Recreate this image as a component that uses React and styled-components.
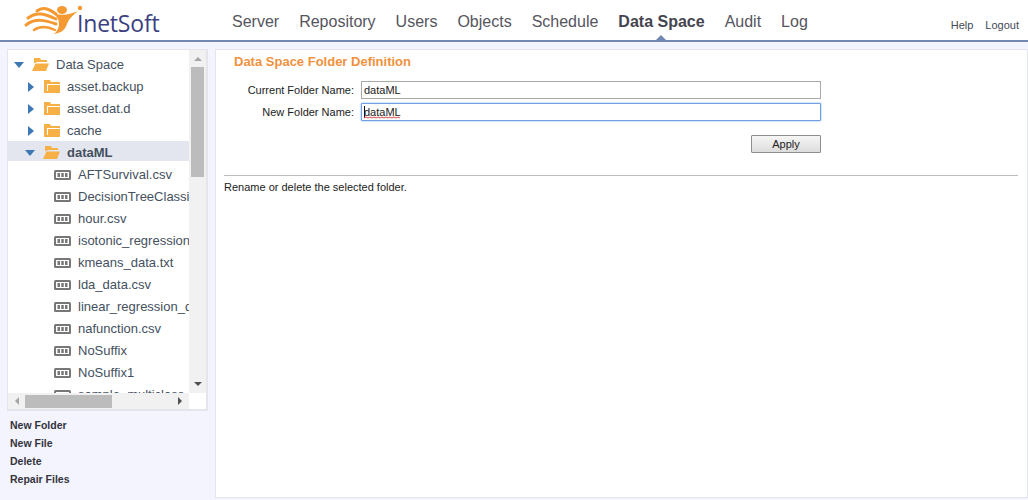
import React from "react";
import styled, { createGlobalStyle } from "styled-components";

const Global = createGlobalStyle`
  html, body { margin: 0; padding: 0; height: 100%; background: #f4f4fe; overflow: hidden; }
  * { box-sizing: border-box; }
  body { font-family: "Liberation Sans", Arial, sans-serif; }
`;
const Page = styled.div`width:1028px;height:500px;display:flex;flex-direction:column;background:#f4f4fe;`;
const Header = styled.header`height:42px;flex:none;background:#fff;border-bottom:2px solid #7189b2;display:flex;align-items:flex-start;position:relative;`;
const LogoBox = styled.div`width:232px;height:40px;padding:4px 0 0 23px;flex:none;display:flex;align-items:flex-start;`;
const LogoText = styled.span`font-family:"Open Sans","Liberation Sans",sans-serif;font-size:23px;color:#3c3f80;line-height:30px;margin:4px 0 0 -6px;letter-spacing:-.2px;`;
const Nav = styled.nav`display:flex;gap:20px;padding-top:12px;height:40px;`;
const NavItem = styled.a`font-size:16px;line-height:20px;color:${p=>p.$active?"#45454f":"#555560"};font-weight:${p=>p.$active?700:400};position:relative;
  ${p=>p.$active?`&::after{content:"";position:absolute;left:50%;margin-left:-5px;bottom:0;border:5px solid transparent;border-top:0;border-bottom-color:#7189b2;}`:""}`;
const UserLinks = styled.div`margin-left:auto;display:flex;gap:12px;padding:18px 9px 0 0;font-size:11px;line-height:14px;color:#3f4a55;`;
const Body = styled.div`flex:1;display:flex;padding:7px 0 2px 7px;gap:7px;min-height:0;`;
const Side = styled.aside`width:201px;flex:none;display:flex;flex-direction:column;`;
const TreePanel = styled.div`height:362px;border:1px solid #e4e4ea;border-width:1px 2px 2px 1px;background:#fff;display:grid;grid-template-columns:181px 17px;grid-template-rows:343px 16px;`;
const TreeView = styled.div`overflow:hidden;padding-top:3px;min-width:0;`;
const Row = styled.div`height:22px;display:flex;align-items:center;white-space:nowrap;font-size:13px;padding-top:1px;color:#44505e;padding-left:${p=>p.$indent}px;position:relative;font-weight:${p=>p.$bold?700:400};
  ${p=>p.$sel?`&::before{content:"";position:absolute;left:0;right:0;top:0;height:20px;background:#e3e6ee;z-index:0;}`:""}
  & > * { position:relative; z-index:1; }
  & > svg { flex:none; }`;
const Arrow = styled.span`width:0;height:0;flex:none;border-style:solid;
  ${p=>p.$open?`border-width:6px 5px 0 5px;border-color:#3e78b3 transparent transparent transparent;margin-right:${p.$gap}px;`
  :`border-width:5px 0 5px 6px;border-color:transparent transparent transparent #3e78b3;margin-right:${p.$gap}px;`}`;
const Label = styled.span`margin-left:${p=>p.$m}px;`;
const VBar = styled.div`background:#f1f1f1;display:flex;flex-direction:column;align-items:center;position:relative;`;
const VThumb = styled.div`width:13px;height:110px;background:#bcbcbc;margin-top:17px;`;
const ArrowUp = styled.span`position:absolute;top:7px;border:4px solid transparent;border-top:0;border-bottom:4px solid #a5a5a5;`;
const ArrowDown = styled.span`position:absolute;bottom:7px;border:4px solid transparent;border-bottom:0;border-top:4px solid #505050;`;
const HBar = styled.div`background:#f1f1f1;position:relative;display:flex;align-items:center;`;
const HThumb = styled.div`width:87px;height:13px;background:#bcbcbc;margin-left:17px;`;
const ArrowL = styled.span`position:absolute;left:7px;top:4px;border:4px solid transparent;border-left:0;border-right:4px solid #a5a5a5;`;
const ArrowR = styled.span`position:absolute;right:7px;top:4px;border:4px solid transparent;border-right:0;border-left:4px solid #505050;`;
const Corner = styled.div`background:#fff;`;
const Actions = styled.div`padding:5px 0 0 3px;display:flex;flex-direction:column;`;
const Action = styled.a`font-size:10.5px;font-weight:700;line-height:18px;color:#33333c;`;
const Main = styled.main`width:813px;height:449px;flex:none;background:#fff;border:1px solid #e4e4ee;padding:0 8px;`;
const Title = styled.h1`margin:0;padding:4px 0 0 10px;font-size:13px;line-height:15px;font-weight:700;color:#f0923e;`;
const Form = styled.div`display:grid;grid-template-columns:130px 460px;column-gap:7px;row-gap:4px;margin-top:12px;align-items:center;`;
const FieldLabel = styled.label`font-size:11px;color:#222;text-align:right;`;
const FieldWrap = styled.div`position:relative;`;
const Input = styled.input`display:block;width:460px;height:18px;font:11px "Liberation Sans",Arial,sans-serif;color:#222;padding:0 2px;border:1px solid #a9a9a9;background:#fff;outline:none;
  ${p=>p.$focus?`border:1px solid #6f9fe6;box-shadow:0 0 2px 0 #7aa7e8;border-radius:1px;`:""}`;
const Caret = styled.span`position:absolute;left:3px;top:3px;width:1px;height:12px;background:#111;`;
const Squiggle = styled.svg`position:absolute;left:3px;top:13px;`;
const ButtonRow = styled.div`width:597px;display:flex;justify-content:flex-end;margin-top:14px;`;
const Apply = styled.button`width:70px;height:18px;padding:0;font:11px "Liberation Sans",Arial,sans-serif;color:#222;border:1px solid #8e8e8e;border-radius:1px;background:linear-gradient(#f6f6f6,#dcdcdc);`;
const Rule = styled.hr`margin:22px 0 0;width:794px;border:0;border-top:1px solid #bcbcbc;`;
const Note = styled.p`margin:5px 0 0;font-size:11px;line-height:12px;color:#222;`;

const FolderOpen = () => (
  <svg width="17" height="13" viewBox="0 0 17 13"><path d="M2 0h6l1 2h6v2H5L3 5H2z" fill="#f7b045"/><path d="M3.5 5.5H17l-3 7.5H0z" fill="#f7b045"/></svg>
);
const Folder = () => (
  <svg width="16" height="13" viewBox="0 0 16 13"><path d="M0 0h6l1 2h9v2H3v7h13v2H0z" fill="#f7b045"/><rect x="4" y="5" width="12" height="8" fill="#f7b045"/></svg>
);
const FileIcon = () => (
  <svg width="17" height="10" viewBox="0 0 17 10"><rect width="17" height="10" rx="1.5" fill="#777"/><rect x="2" y="2" width="13" height="6" fill="#fff"/><rect x="3.5" y="3" width="2.5" height="4" fill="#777"/><rect x="7.25" y="3" width="2.5" height="4" fill="#777"/><rect x="11" y="3" width="2.5" height="4" fill="#777"/></svg>
);
const Logo = () => (
  <svg width="60" height="32" viewBox="0 0 60 32">
    <g fill="none" stroke="#f59a32" strokeLinecap="round">
      <path d="M14 7C20 2 26 5 33 10" strokeWidth="3"/>
      <path d="M5 14C14 7 22 10 33 15" strokeWidth="3"/>
      <path d="M3 21C12 14 22 16 33 20" strokeWidth="3"/>
      <path d="M11 26C18 21 26 23 32 26" strokeWidth="2.5"/>
    </g>
    <path d="M30 9C38 12 46 11 55 7C49 12 46 15 44 20C42 26 38 29 31 30C36 26 37 20 35 15C34 13 32 11 30 9Z" fill="#f59a32"/>
    <ellipse cx="39" cy="6" rx="5" ry="4" fill="#f59a32"/>
    <circle cx="57" cy="4" r="2.2" fill="#f59a32"/>
  </svg>
);

const nav = ["Server","Repository","Users","Objects","Schedule","Data Space","Audit","Log"];
const folders = ["asset.backup","asset.dat.d","cache"];
const files = ["AFTSurvival.csv","DecisionTreeClassificationData.csv","hour.csv","isotonic_regression_data.txt","kmeans_data.txt","lda_data.csv","linear_regression_data.csv","nafunction.csv","NoSuffix","NoSuffix1","sample_multiclass_data.txt"];
const actions = ["New Folder","New File","Delete","Repair Files"];

export default function App() {
  return (
    <Page>
      <Global />
      <Header>
        <LogoBox><Logo /><LogoText>InetSoft</LogoText></LogoBox>
        <Nav>{nav.map(n => <NavItem key={n} $active={n==="Data Space"}>{n}</NavItem>)}</Nav>
        <UserLinks><span>Help</span><span>Logout</span></UserLinks>
      </Header>
      <Body>
        <Side>
          <TreePanel>
            <TreeView>
              <Row $indent={6}><Arrow $open $gap={8}/><FolderOpen/><Label $m={7}>Data Space</Label></Row>
              {folders.map(f => <Row key={f} $indent={20}><Arrow $gap={10}/><Folder/><Label $m={7}>{f}</Label></Row>)}
              <Row $indent={17} $bold $sel><Arrow $open $gap={8}/><FolderOpen/><Label $m={7}>dataML</Label></Row>
              {files.map(f => <Row key={f} $indent={46}><FileIcon/><Label $m={7}>{f}</Label></Row>)}
            </TreeView>
            <VBar><ArrowUp/><VThumb/><ArrowDown/></VBar>
            <HBar><ArrowL/><HThumb/><ArrowR/></HBar>
            <Corner/>
          </TreePanel>
          <Actions>{actions.map(a => <Action key={a}>{a}</Action>)}</Actions>
        </Side>
        <Main>
          <Title>Data Space Folder Definition</Title>
          <Form>
            <FieldLabel>Current Folder Name:</FieldLabel>
            <FieldWrap><Input readOnly value="dataML"/></FieldWrap>
            <FieldLabel>New Folder Name:</FieldLabel>
            <FieldWrap>
              <Input readOnly $focus value="dataML"/>
              <Caret/>
              <Squiggle width="36" height="3" viewBox="0 0 36 3"><path d="M0 2L2 1L4 2L6 1L8 2L10 1L12 2L14 1L16 2L18 1L20 2L22 1L24 2L26 1L28 2L30 1L32 2L34 1L36 2" fill="none" stroke="#d84a4a" strokeWidth="1"/></Squiggle>
            </FieldWrap>
          </Form>
          <ButtonRow><Apply>Apply</Apply></ButtonRow>
          <Rule/>
          <Note>Rename or delete the selected folder.</Note>
        </Main>
      </Body>
    </Page>
  );
}
